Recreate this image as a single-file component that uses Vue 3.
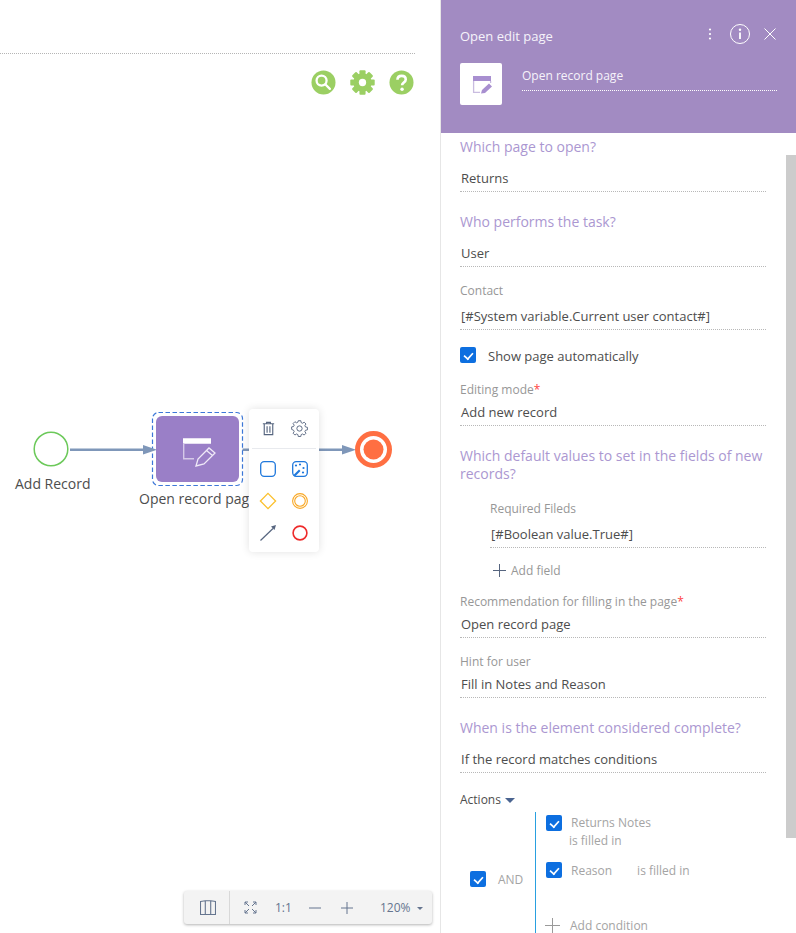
<script setup>
</script>

<template>
  <div class="page">
    <section class="designer">
      <div class="topline"></div>
      <div class="tools">
        <svg class="tool" viewBox="0 0 26 26"><circle cx="13" cy="13" r="12.500" fill="#9bcf63"/><circle cx="11" cy="11" r="5.200" fill="none" stroke="#fff" stroke-width="2.400"/><path d="M14.800 14.800l4.800 4.800" stroke="#fff" stroke-width="2.400" stroke-linecap="round"/></svg>
        <svg class="tool" viewBox="0 0 26 26"><g fill="#9bcf63"><circle cx="13" cy="13" r="9.500"/><rect x="9.800" y="0.300" width="6.400" height="25.400" rx="1"/><rect x="9.800" y="0.300" width="6.400" height="25.400" rx="1" transform="rotate(45 13 13)"/><rect x="9.800" y="0.300" width="6.400" height="25.400" rx="1" transform="rotate(90 13 13)"/><rect x="9.800" y="0.300" width="6.400" height="25.400" rx="1" transform="rotate(135 13 13)"/></g><circle cx="13" cy="13" r="3.800" fill="#fff"/></svg>
        <svg class="tool" viewBox="0 0 26 26"><circle cx="13" cy="13" r="12.500" fill="#9bcf63"/><path d="M8.800 10.200c0-2.600 1.900-4.100 4.400-4.100s4.200 1.500 4.200 3.700c0 3.100-3.800 3.300-3.800 6.100" fill="none" stroke="#fff" stroke-width="2.700"/><circle cx="13.600" cy="20" r="1.800" fill="#fff"/></svg>
      </div>

      <svg class="diagram" width="440" height="933" viewBox="0 0 440 933">
        <circle cx="51" cy="449" r="16.800" fill="#fff" stroke="#6cc95a" stroke-width="1.500"/>
        <path d="M70 449.800H148" stroke="#7f97b9" stroke-width="2.500"/>
        <path d="M239 449.800H346" stroke="#7f97b9" stroke-width="2.500"/>
        <path d="M342 445L356 449.800L342 454.500Z" fill="#7f97b9"/>
        <rect x="152.500" y="412.500" width="90" height="73" rx="6" fill="#fff" stroke="#3d78d8" stroke-width="1.200" stroke-dasharray="4.500 2.500"/>
        <path d="M143 445L157 449.800L143 454.500Z" fill="#7f97b9"/>
        <rect x="156" y="416" width="83" height="66" rx="6" fill="#9a7fc7"/>
        <path d="M183 441H211" stroke="#fff" stroke-width="5.500"/>
        <path d="M183.700 443V458.800H194" fill="none" stroke="#d5c9e8" stroke-width="1.400"/>
        <path d="M196 466L198 459L209 448L215 453L204 464Z M206.500 450.500L212.500 455.500" fill="none" stroke="#efe9f7" stroke-width="1.300"/>
        <circle cx="373.500" cy="449.500" r="16" fill="#fff" stroke="#ff6f42" stroke-width="5"/>
        <circle cx="373.500" cy="449.500" r="10" fill="#ff6f42"/>
        <text x="15" y="489" class="cap">Add Record</text>
        <text x="139" y="504" class="cap">Open record page</text>
      </svg>

      <div class="menu">
        <div class="menu-row">
          <svg viewBox="0 0 18 18"><path d="M3 4h12M7 4V2.500h4V4M4.500 4v11.500h9V4M7.500 6.500v7M10.500 6.500v7" fill="none" stroke="#56657f" stroke-width="1.200"/></svg>
          <svg viewBox="0 0 18 18"><circle cx="9" cy="9" r="2.800" fill="none" stroke="#56657f"/><path d="M7.600 1h2.800l.4 2.100 1.500.7 1.800-1.200 2 2-1.200 1.800.7 1.500 2.100.4v2.800l-2.100.4-.7 1.500 1.200 1.800-2 2-1.800-1.200-1.500.7-.4 2.100H7.600l-.4-2.100-1.500-.7-1.800 1.200-2-2 1.200-1.800-.7-1.500L.3 10.600V7.800l2.100-.4.700-1.500-1.200-1.800 2-2 1.800 1.200 1.500-.7z" transform="translate(.4 -.2) scale(.96)" fill="none" stroke="#56657f"/></svg>
        </div>
        <div class="menu-sep"></div>
        <div class="menu-grid">
          <svg viewBox="0 0 16 16"><rect x=".7" y=".7" width="14.600" height="14.600" rx="3.500" fill="none" stroke="#1f78dc" stroke-width="1.300"/></svg>
          <svg viewBox="0 0 16 16"><rect x=".7" y=".7" width="14.600" height="14.600" rx="3.500" fill="none" stroke="#1f78dc" stroke-width="1.300"/><path d="M1.500 14L7 8.500L8.500 10L3 15.500z" fill="#1f78dc"/><circle cx="4" cy="4.500" r="1.100" fill="#1f78dc"/><circle cx="8" cy="3.500" r="1.100" fill="#1f78dc"/><circle cx="11.500" cy="7" r="1.100" fill="#1f78dc"/><circle cx="11" cy="11.500" r="1.100" fill="#1f78dc"/></svg>
          <svg viewBox="0 0 16 16"><path d="M8 .4L15.600 8L8 15.600L.4 8Z" fill="none" stroke="#fbc02d" stroke-width="1.300"/></svg>
          <svg viewBox="0 0 16 16"><circle cx="8" cy="8" r="7.400" fill="none" stroke="#f9a825" stroke-width="1.100"/><circle cx="8" cy="8" r="5.300" fill="none" stroke="#f9a825" stroke-width="1.100"/></svg>
          <svg viewBox="0 0 16 16"><path d="M.5 15.500L13 3.500" stroke="#56657f" stroke-width="1.200"/><path d="M11 1.500L16 0L14.500 5Z" fill="#56657f"/></svg>
          <svg viewBox="0 0 16 16"><circle cx="8" cy="8" r="6.900" fill="none" stroke="#ee2b2b" stroke-width="1.600"/></svg>
        </div>
      </div>

      <div class="zoombar">
        <span class="zb-map"><svg width="16" height="15" viewBox="0 0 16 15"><path d="M.5 1.500L5.300 .8L10.700 .8L15.500 1.500V14.500H.5ZM5.300 .8V14.500M10.700 .8V14.500" fill="none" stroke="#65758f" stroke-width="1.100"/></svg></span>
        <span class="zb-fit"><svg width="13" height="13" viewBox="0 0 13 13"><path d="M1 4V1H4M1 1L5 5M9 1H12V4M12 1L8 5M1 9V12H4M1 12L5 8M9 12H12V9M12 12L8 8" fill="none" stroke="#65758f"/></svg></span>
        <span class="zb-txt one">1:1</span>
        <span class="zb-sym"><svg width="12" height="12" viewBox="0 0 12 12"><path d="M0 6H12" stroke="#65758f"/></svg></span>
        <span class="zb-sym"><svg width="12" height="12" viewBox="0 0 12 12"><path d="M0 6H12M6 0V12" stroke="#65758f"/></svg></span>
        <span class="zb-txt pct">120%</span>
        <span class="zb-caret"></span>
      </div>
    </section>

    <aside class="panel">
      <header class="head">
        <div class="head-top">
          <span class="title">Open edit page</span>
          <svg class="dots" width="4" height="12" viewBox="0 0 4 12"><circle cx="2" cy="1.500" r="1.100" fill="#fff"/><circle cx="2" cy="6" r="1.100" fill="#fff"/><circle cx="2" cy="10.500" r="1.100" fill="#fff"/></svg>
          <svg class="info" width="20" height="20" viewBox="0 0 20 20"><circle cx="10" cy="10" r="9.500" fill="none" stroke="#fff"/><circle cx="10" cy="5.800" r="1.200" fill="#fff"/><path d="M10 8.500V15" stroke="#fff" stroke-width="1.800"/></svg>
          <svg class="close" width="12" height="12" viewBox="0 0 12 12"><path d="M.5 .5L11.500 11.500M11.500 .5L.5 11.500" stroke="#fff"/></svg>
        </div>
        <div class="head-row">
          <div class="icon-box">
            <svg width="22" height="20" viewBox="0 0 22 20"><path d="M3 2H21V7H3Z" fill="#a88fd0"/><path d="M3.600 7V18.400H10" fill="none" stroke="#c9bce0" stroke-width="1.300"/><path d="M20.600 7V9" fill="none" stroke="#c9bce0" stroke-width="1.300"/><path d="M11 19.500L12 16L19 9.500L22 12.500L15 19Z" fill="#a88fd0"/></svg>
          </div>
          <div class="name">Open record page</div>
        </div>
      </header>

      <div class="body">
        <div class="h h1">Which page to open?</div>
        <div class="val v11">Returns</div>
        <div class="h m20">Who performs the task?</div>
        <div class="val v11">User</div>
        <div class="lbl m15">Contact</div>
        <div class="val v8">[#System variable.Current user contact#]</div>
        <label class="check m15"><span class="box"></span><span class="check-text">Show page automatically</span></label>
        <div class="lbl m16">Editing mode<i>*</i></div>
        <div class="val v5">Add new record</div>
        <div class="h two">Which default values to set in the fields of new records?</div>
        <div class="nested">
          <div class="lbl m17">Required Fileds</div>
          <div class="val v8">[#Boolean value.True#]</div>
          <div class="add"><svg width="13" height="13" viewBox="0 0 13 13"><path d="M6.500 0V13M0 6.500H13" stroke="#56657f"/></svg>Add field</div>
        </div>
        <div class="lbl m13">Recommendation for filling in the page<i>*</i></div>
        <div class="val v5">Open record page</div>
        <div class="lbl m15">Hint for user</div>
        <div class="val v5">Fill in Notes and Reason</div>
        <div class="h m20">When is the element considered complete?</div>
        <div class="val v11">If the record matches conditions</div>
        <div class="actions">Actions<span class="caret"></span></div>
        <div class="conds">
          <div class="group">
            <span class="box"></span>
            <span class="and">AND</span>
          </div>
          <div class="rules">
            <div class="rule r1">
              <span class="box"></span>
              <div class="rule-text"><div class="rt1">Returns Notes</div><div class="rt2">is filled in</div></div>
            </div>
            <div class="rule r2">
              <span class="box"></span>
              <div class="rule-line"><span>Reason</span><span>is filled in</span></div>
            </div>
            <div class="addc"><svg width="15" height="15" viewBox="0 0 15 15"><path d="M7.500 0V15M0 7.500H15" stroke="#9a9a9a"/></svg>Add condition</div>
          </div>
        </div>
      </div>
      <div class="scroll"></div>
    </aside>
  </div>
</template>

<style>
html, body { margin: 0; background: #fff; }
</style>

<style scoped>
.page { width: 796px; height: 933px; display: flex; overflow: hidden; font-family: "Open Sans", sans-serif; font-size: 13px; color: #4d4d4d; background: #fff; }
.designer { position: relative; width: 440px; flex: none; }
.topline { width: 415px; height: 54px; border-bottom: 1px dotted #b5b5b5; box-sizing: border-box; }
.tools { display: flex; justify-content: flex-end; gap: 14px; padding: 16px 26px 0 0; position: relative; z-index: 2; }
.tool { width: 25px; height: 25px; display: block; }
.diagram { position: absolute; left: 0; top: 0; }
.cap { font-family: "Open Sans", sans-serif; font-size: 14px; fill: #4d4d4d; }
.menu { position: absolute; left: 249px; top: 409px; width: 70px; height: 143px; background: #fff; border-radius: 4px; box-shadow: 0 0 8px rgba(0,0,0,.12); box-sizing: border-box; }
.menu-row { display: flex; height: 39px; align-items: center; justify-content: space-between; padding: 0 11px; box-sizing: border-box; }
.menu-row svg { width: 17px; height: 17px; }
.menu-sep { height: 1px; background: #e8eaee; margin: 0 3px; }
.menu-grid { display: grid; grid-template-columns: 16px 16px; column-gap: 16px; row-gap: 16px; padding: 12px 11px 0; }
.menu-grid svg { width: 16px; height: 16px; display: block; overflow: visible; }
.zoombar { position: absolute; left: 184px; top: 891px; width: 248px; height: 33px; background: #f3f3f3; border-radius: 3px; box-shadow: 0 1px 3px rgba(0,0,0,.3); display: flex; align-items: center; color: #65758f; font-size: 12px; box-sizing: border-box; }
.zb-map { width: 43px; padding-left: 2px; height: 33px; display: flex; align-items: center; justify-content: center; border-right: 1px solid #d8d8d8; }
.zb-fit { display: flex; margin-left: 14px; }
.zb-txt.one { margin-left: 18px; width: 24px; }
.zb-sym { display: flex; margin-left: 10px; }
.zb-sym + .zb-sym { margin-left: 20px; }
.zb-txt.pct { margin-left: 27px; }
.zb-caret { margin-left: 6px; margin-top: 2px; border: 3px solid transparent; border-top: 3px solid #65758f; border-bottom: 0; }

.panel { position: relative; flex: 1; border-left: 1px solid #e6e6e6; box-sizing: border-box; min-width: 0; }
.head { height: 133px; background: #a28bc2; padding: 0 19px; box-sizing: border-box; color: #fff; }
.head-top { display: flex; align-items: flex-start; height: 63px; padding-top: 24px; box-sizing: border-box; }
.title { font-weight: 500; flex: 1; margin-top: 3px; line-height: 18px; color: #f6f3fa; }
.dots { margin-top: 4px; margin-right: 18px; }
.info { margin-right: 14px; }
.close { margin-top: 4px; margin-right: 1px; }
.head-row { display: flex; gap: 20px; }
.icon-box { width: 42px; height: 42px; background: #fff; border-radius: 2px; display: flex; align-items: center; justify-content: center; flex: none; }
.name { flex: 1; height: 28px; line-height: 26px; border-bottom: 1px dotted #fff; font-weight: 500; font-size: 12px; color: #f6f3fa; box-sizing: border-box; }

.body { width: 306px; margin-left: 19px; }
.h { font-size: 14px; line-height: 20px; color: #ab97d1; }
.h1 { margin-top: 4px; }
.two { line-height: 18px; margin-top: 21px; width: 310px; }
.val { line-height: 20px; padding-bottom: 3px; padding-left: 1px; border-bottom: 1px dotted #b8b8b8; }
.lbl { font-size: 12px; line-height: 18px; height: 16px; color: #979797; }
.lbl i { color: #f44; font-style: normal; }
.m13 { margin-top: 13px; } .m15 { margin-top: 15px; } .m16 { margin-top: 16px; } .m17 { margin-top: 17px; } .m20 { margin-top: 20px; }
.v5 { margin-top: 5px; } .v8 { margin-top: 8px; } .v11 { margin-top: 11px; }
.check { display: flex; align-items: center; gap: 12px; height: 20px; }
.check-text { padding-top: 2px; }
.box { position: relative; display: block; width: 16px; height: 16px; border-radius: 2px; background: #0d6fe0; flex: none; }
.box::after { content: ""; position: absolute; left: 5px; top: 3px; width: 5px; height: 8px; border: solid #fff; border-width: 0 2px 2px 0; transform: rotate(42deg) scale(.85); }
.nested { padding-left: 30px; }
.add { display: flex; align-items: center; gap: 5px; margin-top: 12px; line-height: 20px; font-size: 12px; color: #979797; padding: 1px 0 0 3px; height: 20px; box-sizing: border-box; }
.actions { margin-top: 17px; font-size: 12px; line-height: 20px; display: flex; align-items: center; gap: 4px; }
.caret { border: 5px solid transparent; border-top: 5px solid #4a6490; border-bottom: 0; margin-top: 1px; }
.conds { display: flex; margin-top: 2px; height: 150px; font-size: 12px; color: #a4a4a4; }
.group { width: 65px; height: 100%; padding: 59px 0 0 10px; box-sizing: content-box; display: flex; gap: 12px; align-items: flex-start; border-right: 1px solid #29a0e0; margin-left: 0; }
.and { line-height: 18px; }
.rules { padding-left: 10px; }
.rule { display: flex; gap: 9px; }
.r1, .r2 { padding-top: 3px; height: 47px; box-sizing: border-box; }
.rt1 { line-height: 16px; }
.rt2 { line-height: 16px; margin-top: 2px; margin-left: -2px; }
.rule-line { display: flex; gap: 25px; line-height: 16px; margin-top: 1px; }
.addc { display: flex; align-items: center; gap: 10px; margin-top: 12px; line-height: 14px; margin-left: -1px; }
.scroll { position: absolute; right: 0; top: 155px; width: 10px; height: 683px; background: #ccc; }
</style>
